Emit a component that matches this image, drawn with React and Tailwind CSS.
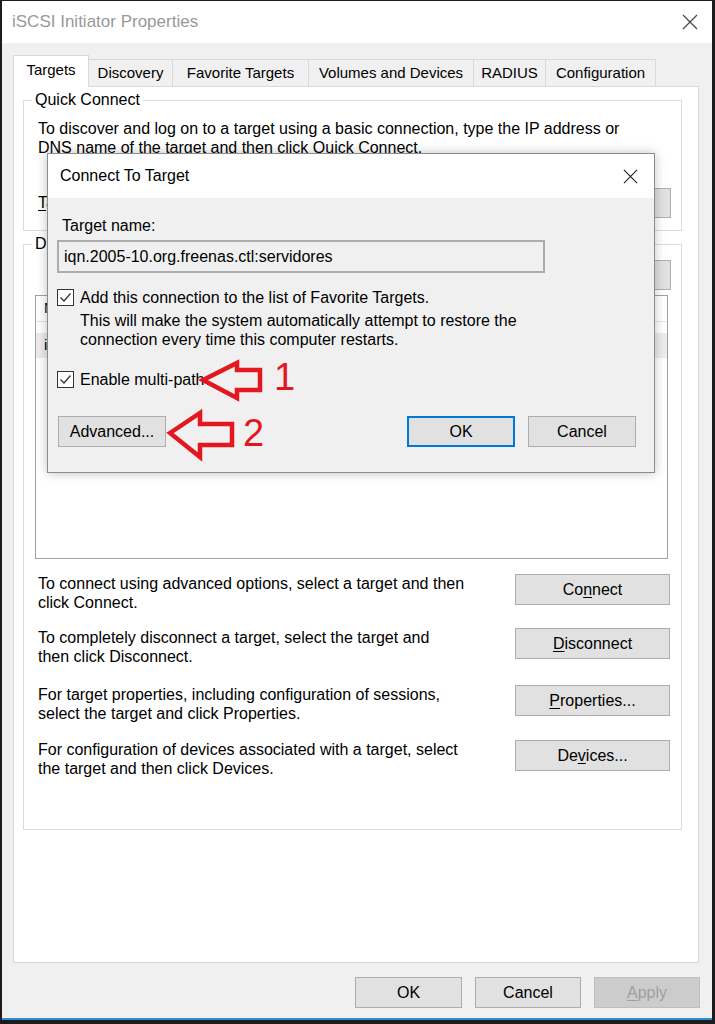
const Btn = ({ children, className = '' }) => (
  <div className={`flex items-center justify-center border text-[16px] leading-none ${className}`}>
    {children}
  </div>
);

const CheckBox = () => (
  <div className="w-[17px] h-[17px] shrink-0 bg-white border border-[#333]">
    <svg viewBox="0 0 15 15" className="w-full h-full" fill="none" stroke="#333" strokeWidth="1.3">
      <path d="M2.5 7.5 L6 11 L12.5 3.5" />
    </svg>
  </div>
);

const CloseX = ({ size = 16, color = '#444' }) => (
  <svg width={size} height={size} viewBox="0 0 16 16" fill="none" stroke={color} strokeWidth="1.2">
    <path d="M1 1 L15 15 M15 1 L1 15" />
  </svg>
);

const tabs = [
  ['Discovery', 'w-[85px]'],
  ['Favorite Targets', 'w-[137px]'],
  ['Volumes and Devices', 'w-[166px]'],
  ['RADIUS', 'w-[73px]'],
  ['Configuration', 'w-[111px]'],
];

const actions = [
  {
    text: ['To connect using advanced options, select a target and then', 'click Connect.'],
    label: <>Co<u className="underline-offset-2">n</u>nect</>,
    h: 'h-[54px]',
  },
  {
    text: ['To completely disconnect a target, select the target and', 'then click Disconnect.'],
    label: <><u className="underline-offset-2">D</u>isconnect</>,
    h: 'h-[57px]',
  },
  {
    text: ['For target properties, including configuration of sessions,', 'select the target and click Properties.'],
    label: <><u className="underline-offset-2">P</u>roperties...</>,
    h: 'h-[55px]',
  },
  {
    text: ['For configuration of devices associated with a target, select', 'the target and then click Devices.'],
    label: <>De<u className="underline-offset-2">v</u>ices...</>,
    h: 'h-[55px]',
  },
];

export default function App() {
  return (
    <div className="relative w-[715px] h-[1024px] bg-[#1c1c1c] pt-px pl-[2px] pr-[3px] pb-[4px] font-[family-name:Liberation_Sans,Arial,sans-serif] text-black">
      <div className="h-full bg-[#f0f0f0] border-b-2 border-[#2b8fd6] flex flex-col">
        {/* Title bar */}
        <div className="h-[42px] shrink-0 bg-white flex items-center justify-between pl-[10px] pr-[14px]">
          <span className="text-[17px] text-[#999]">iSCSI Initiator Properties</span>
          <CloseX />
        </div>

        {/* Tabs */}
        <div className="flex items-end pl-[11px] pt-[12px] -mb-px">
          <div className="relative z-10 w-[76px] h-[32px] bg-white border border-b-0 border-[#d9d9d9] flex items-center justify-center text-[15px] pb-[2px]">
            Targets
          </div>
          {tabs.map(([name, w]) => (
            <div
              key={name}
              className={`${w} h-[27px] mb-px -ml-px bg-[#f0f0f0] border border-b-0 border-[#d9d9d9] flex items-center justify-center text-[15px]`}
            >
              {name}
            </div>
          ))}
        </div>

        {/* Tab panel */}
        <div className="ml-[11px] w-[686px] h-[877px] shrink-0 bg-white border border-[#d9d9d9] flex flex-col">
          <fieldset className="mt-[3px] ml-[9px] mr-[16px] h-[141px] border border-[#dcdcdc]">
            <legend className="ml-[8px] px-[3px] text-[16px] leading-[20px]">Quick Connect</legend>
            <p className="mt-[9px] px-[14px] text-[16px] leading-[19px]">
              To discover and log on to a target using a basic connection, type the IP address or
              <br />
              DNS name of the target and then click Quick Connect.
            </p>
            <div className="flex items-center mt-[31px] pl-[14px] pr-[10px] gap-[8px]">
              <span className="text-[16px]"><u className="underline-offset-2">T</u>arget:</span>
              <div className="flex-1 h-[25px] bg-white border border-[#7a7a7a]" />
              <Btn className="w-[155px] h-[30px] bg-[#e1e1e1] border-[#adadad]">
                <u className="underline-offset-2">Q</u>uick Connect
              </Btn>
            </div>
          </fieldset>

          <fieldset className="mt-[3px] ml-[9px] mr-[16px] h-[596px] border border-[#dcdcdc]">
            <legend className="ml-[8px] px-[3px] text-[16px] leading-[20px]">Discovered targets</legend>
            <div className="flex justify-end pr-[10px] mt-[6px]">
              <Btn className="w-[155px] h-[30px] bg-[#e1e1e1] border-[#adadad]">
                <u className="underline-offset-2">R</u>efresh
              </Btn>
            </div>

            {/* Target list */}
            <div className="mt-[5px] ml-[11px] mr-[13px] h-[264px] bg-white border border-[#a0a0a0] text-[15px]">
              <div className="flex h-[26px] border-b border-[#e5e5e5]">
                <div className="w-[420px] pl-[8px] flex items-center border-r border-[#e5e5e5]">Name</div>
                <div className="pl-[8px] flex items-center">Status</div>
              </div>
              <div className="flex h-[25px] mt-[11px] bg-[#ececec]">
                <div className="w-[420px] pl-[8px] flex items-center">iqn.2005-10.org.freenas.ctl:servidores</div>
                <div className="pl-[8px] flex items-center">Inactive</div>
              </div>
            </div>

            <div className="mt-[15px]">
              {actions.map((a, i) => (
                <div key={i} className={`flex justify-between pl-[14px] pr-[11px] ${a.h}`}>
                  <p className="text-[16px] leading-[19px]">
                    {a.text[0]}
                    <br />
                    {a.text[1]}
                  </p>
                  <Btn className="w-[155px] h-[31px] bg-[#e1e1e1] border-[#adadad]">{a.label}</Btn>
                </div>
              ))}
            </div>
          </fieldset>
        </div>

        {/* Bottom buttons */}
        <div className="flex justify-end gap-[13px] pr-[12px] mt-[14px]">
          <Btn className="w-[107px] h-[31px] bg-[#e1e1e1] border-[#adadad]">OK</Btn>
          <Btn className="w-[106px] h-[31px] bg-[#e1e1e1] border-[#adadad]">Cancel</Btn>
          <Btn className="w-[106px] h-[31px] bg-[#cccccc] border-[#bfbfbf] text-[#a0a0a0]">
            <u className="underline-offset-2">A</u>pply
          </Btn>
        </div>
      </div>

      {/* Connect To Target dialog */}
      <div className="absolute left-[47px] top-[153px] w-[608px] h-[320px] bg-[#f0f0f0] border border-[#8c8c8c] shadow-[0_0_10px_rgba(0,0,0,0.25)] flex flex-col">
        <div className="h-[44px] shrink-0 bg-white flex items-center justify-between pl-[12px] pr-[16px]">
          <span className="text-[16px]">Connect To Target</span>
          <CloseX size={15} color="#222" />
        </div>
        <div className="pl-[9px] pr-[18px] pt-[18px]">
          <p className="ml-[5px] text-[16px] leading-[19px]">Target name:</p>
          <div className="mt-[5px] w-[488px] h-[33px] border-2 border-[#adadad] bg-[#f0f0f0] flex items-center pl-[5px] text-[16px]">
            iqn.2005-10.org.freenas.ctl:servidores
          </div>

          <div className="flex mt-[16px] gap-[6px]">
            <CheckBox />
            <div className="-mt-px text-[16px] leading-[19px]">
              <p>Add this connection to the list of Favorite Targets.</p>
              <p className="mt-[4px]">
                This will make the system automatically attempt to restore the
                <br />
                connection every time this computer restarts.
              </p>
            </div>
          </div>

          <div className="flex mt-[22px] gap-[6px]">
            <CheckBox />
            <p className="-mt-px text-[16px] leading-[19px]">Enable multi-path</p>
          </div>

          <div className="flex mt-[27px]">
            <Btn className="ml-px w-[108px] h-[31px] bg-[#e1e1e1] border-[#adadad]">Advanced...</Btn>
            <div className="flex-1" />
            <Btn className="w-[108px] h-[31px] bg-[#e1e1e1] border-2 border-[#0078d7]">OK</Btn>
            <Btn className="ml-[13px] w-[108px] h-[31px] bg-[#e1e1e1] border-[#adadad]">Cancel</Btn>
          </div>
        </div>
      </div>

      {/* Annotation arrows */}
      <svg className="absolute left-[198px] top-[358px]" width="70" height="46" fill="none" stroke="#e3171f" strokeWidth="4.5">
        <path d="M5 22 L39 5 L39 12 L62 12 L62 32 L39 32 L39 40 Z" />
      </svg>
      <span className="absolute left-[274px] top-[358px] text-[38px] leading-none text-[#e3171f]">1</span>

      <svg className="absolute left-[165px] top-[408px]" width="75" height="54" fill="none" stroke="#e3171f" strokeWidth="4.5">
        <path d="M5 25 L35 5 L35 16 L67 16 L67 37 L35 37 L35 49 Z" />
      </svg>
      <span className="absolute left-[243px] top-[414px] text-[38px] leading-none text-[#e3171f]">2</span>
    </div>
  );
}
